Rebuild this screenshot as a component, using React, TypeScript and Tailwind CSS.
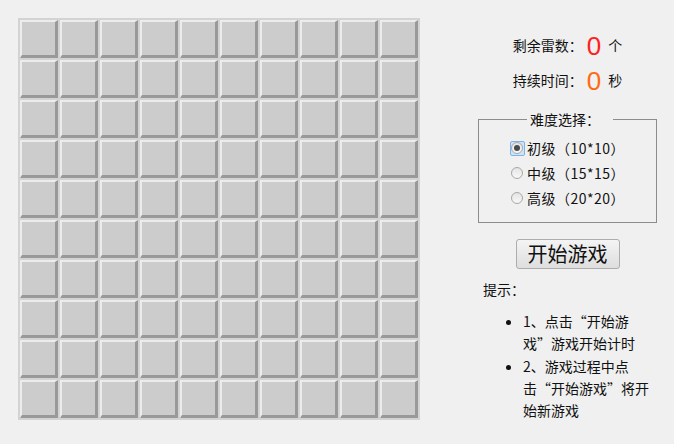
import React from 'react';

const levels = [
  { label: '初级（10*10）', checked: true },
  { label: '中级（15*15）', checked: false },
  { label: '高级（20*20）', checked: false },
];

const Radio = ({ checked }: { checked: boolean }) => (
  <span
    className={`flex h-[15px] w-[15px] items-center justify-center rounded-[2px] ${
      checked ? 'border border-[#7eb4ea] bg-[#cfe3f8]' : 'border border-transparent'
    }`}
  >
    <span className="flex h-[12px] w-[12px] items-center justify-center rounded-full border border-[#a8a8a8] bg-gradient-to-b from-[#e4e4e4] to-[#f8f8f8]">
      {checked && <span className="h-[6px] w-[6px] rounded-full bg-[#4a4a4a]" />}
    </span>
  </span>
);

const Cell = () => (
  <div className="h-[38px] w-[38px] border-t-2 border-l-2 border-r-[3px] border-b-[3px] border-t-[#ececec] border-l-[#ececec] border-r-[#999999] border-b-[#999999] bg-[#cccccc]" />
);

export default function App() {
  const cells = Array.from({ length: 100 });

  return (
    <div
      className="flex h-[444px] w-[674px] bg-[#f0f0f0] pt-[18px] pl-[18px] text-[14px] text-[#111]"
      style={{ fontFamily: '"Noto Sans CJK SC", "Liberation Sans", sans-serif' }}
    >
      {/* board */}
      <div className="grid h-[402px] w-[402px] grid-cols-10 gap-[2px] bg-[#d3d3d3] p-[2px]">
        {cells.map((_, i) => (
          <Cell key={i} />
        ))}
      </div>

      {/* side panel */}
      <div className="ml-[58px] w-[179px] pt-[10px]">
        <div className="flex h-[35px] items-center justify-center">
          <span>剩余雷数：</span>
          <span className="mx-[4px] font-['Liberation_Sans'] text-[26px] leading-none text-[#ff1f1f]">0</span>
          <span className="ml-[3px]">个</span>
        </div>
        <div className="flex h-[35px] items-center justify-center">
          <span>持续时间：</span>
          <span className="mx-[4px] font-['Liberation_Sans'] text-[26px] leading-none text-[#ff6a10]">0</span>
          <span className="ml-[3px]">秒</span>
        </div>

        <fieldset className="mt-[11px] h-[114px] border border-[#8c8c8c] px-0 pt-[9px]">
          <legend className="ml-[48px] pl-[3px] pr-[13px] leading-[20px]">难度选择：</legend>
          <div className="flex flex-col items-center gap-[5px]">
            {levels.map((l) => (
              <label key={l.label} className="flex h-[20px] items-center gap-[2px] leading-[20px] tracking-[0.5px]">
                <Radio checked={l.checked} />
                <span>{l.label}</span>
              </label>
            ))}
          </div>
        </fieldset>

        <div className="mt-[16px] flex justify-center">
          <button className="h-[30px] w-[104px] rounded-[3px] border border-[#adadad] bg-gradient-to-b from-[#f4f4f4] to-[#dedede] text-[20px] leading-none text-[#111]">
            开始游戏
          </button>
        </div>

        <div className="mt-[9px] pl-[5px]">
          <p className="leading-[22px]">提示：</p>
          <ul className="mt-[10px] list-disc pl-[40px] leading-[22px]">
            <li className="mb-[1px]">1、点击“开始游戏”游戏开始计时</li>
            <li>2、游戏过程中点击“开始游戏”将开始新游戏</li>
          </ul>
        </div>
      </div>
    </div>
  );
}
